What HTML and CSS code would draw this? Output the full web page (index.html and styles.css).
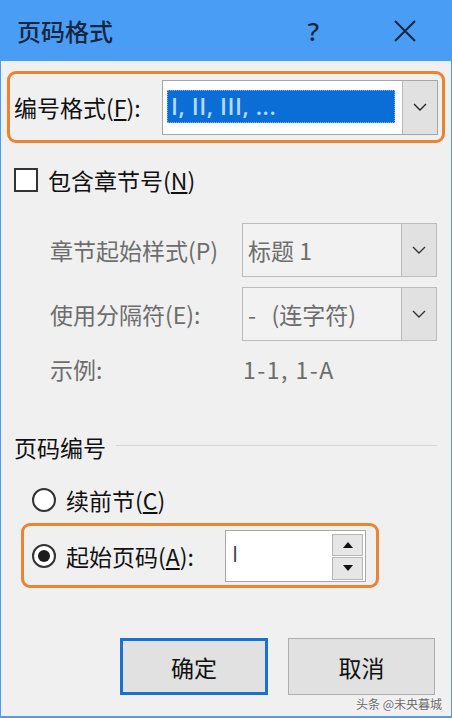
FILE: index.html
```html
<!DOCTYPE html>
<html lang="zh-CN">
<head>
    <meta charset="UTF-8">
    <meta name="viewport" content="width=device-width, initial-scale=1.0">
    <title>页码格式</title>
    <link rel="stylesheet" href="styles.css">
</head>
<body>
    <div class="window">
        <!-- Title bar -->
        <div class="titlebar">
            <span class="title">页码格式</span>
            <span class="help">?</span>
            <span class="close">
                <svg width="22" height="22" viewBox="0 0 22 22">
                    <path d="M1 1 L21 21 M21 1 L1 21" stroke="#16263d" stroke-width="2" fill="none"/>
                </svg>
            </span>
        </div>

        <div class="content">
            <!-- Number format -->
            <div class="mark mark-format">
                <span class="label">编号格式(<u>F</u>):</span>
                <div class="select select-main">
                    <div class="select-value">
                        <span class="selected">I, II, III, ...</span>
                    </div>
                    <div class="select-arrow">
                        <svg width="14" height="8" viewBox="0 0 14 8"><path d="M1 1 L7 7 L13 1" stroke="#222" stroke-width="1.4" fill="none"/></svg>
                    </div>
                </div>
            </div>

            <!-- Chapter number -->
            <div class="check-row">
                <span class="checkbox"></span>
                <span class="label">包含章节号(<u>N</u>)</span>
            </div>

            <div class="sub-row">
                <span class="sub-label">章节起始样式(P)</span>
                <div class="select select-disabled">
                    <div class="select-value">标题 1</div>
                    <div class="select-arrow">
                        <svg width="14" height="8" viewBox="0 0 14 8"><path d="M1 1 L7 7 L13 1" stroke="#333" stroke-width="1.4" fill="none"/></svg>
                    </div>
                </div>
            </div>

            <div class="sub-row sub-row-next">
                <span class="sub-label">使用分隔符(E):</span>
                <div class="select select-disabled">
                    <div class="select-value">-&nbsp;&nbsp;&nbsp;(连字符)</div>
                    <div class="select-arrow">
                        <svg width="14" height="8" viewBox="0 0 14 8"><path d="M1 1 L7 7 L13 1" stroke="#333" stroke-width="1.4" fill="none"/></svg>
                    </div>
                </div>
            </div>

            <div class="example-row">
                <span class="sub-label">示例:</span>
                <span class="example-value">1-1, 1-A</span>
            </div>

            <!-- Page numbering -->
            <div class="group-title">
                <span>页码编号</span>
                <span class="group-line"></span>
            </div>

            <div class="radio-row">
                <span class="radio"></span>
                <span class="label">续前节(<u>C</u>)</span>
            </div>

            <div class="mark mark-start">
                <span class="radio radio-checked"></span>
                <span class="label start-label">起始页码(<u>A</u>):</span>
                <div class="spin">
                    <div class="spin-value">I</div>
                    <div class="spin-buttons">
                        <span class="spin-btn">
                            <svg width="10" height="6" viewBox="0 0 10 6"><path d="M0 6 L5 0 L10 6 Z" fill="#111"/></svg>
                        </span>
                        <span class="spin-btn">
                            <svg width="10" height="6" viewBox="0 0 10 6"><path d="M0 0 L5 6 L10 0 Z" fill="#111"/></svg>
                        </span>
                    </div>
                </div>
            </div>

            <!-- Buttons -->
            <div class="buttons">
                <button class="btn btn-default">确定</button>
                <button class="btn">取消</button>
            </div>
        </div>

        <span class="watermark">头条 @未央暮城</span>
    </div>
</body>
</html>
```

FILE: styles.css
```css
/* Word "page number format" dialog */
body {
    margin: 0;
    padding: 0;
    font-family: "Noto Sans CJK SC", "Noto Sans", sans-serif;
    background-color: #f0f0f0;
}

.window {
    position: relative;
    width: 452px;
    height: 718px;
    box-sizing: border-box;
    border: 1px solid #4a9df5;
    border-top: none;
    border-bottom-width: 2px;
    background-color: #f0f0f0;
    overflow: hidden;
}

.titlebar {
    height: 61px;
    background-color: #4a9df5;
    display: flex;
    align-items: center;
    padding-left: 16px;
    color: #16263d;
}
.title {
    font-size: 24px;
    font-weight: 500;
    flex: 1;
}
.help {
    font-family: "Noto Sans", sans-serif;
    font-size: 26px;
    font-weight: 500;
    margin-right: 75px;
}
.close {
    display: flex;
    margin-right: 35px;
}

.content {
    padding: 0 6px;
    font-size: 23px;
    color: #111;
}

.label {
    line-height: 30px;
}

/* orange highlight frames */
.mark {
    border: 3px solid #ea8430;
    border-radius: 9px;
    display: flex;
    align-items: center;
    box-sizing: border-box;
}
.mark-format {
    margin-top: 10px;
    height: 72px;
    padding: 0 4px;
}
.mark-format .label {
    flex: 1;
}

.select {
    display: flex;
    box-sizing: border-box;
    border: 1px solid #a6a6a6;
}
.select-main {
    width: 276px;
    height: 55px;
    background-color: #fff;
}
.select-value {
    flex: 1;
    display: flex;
    align-items: center;
    padding-left: 4px;
}
.selected {
    display: block;
    width: 228px;
    height: 33px;
    box-sizing: border-box;
    border: 1px dotted #7fb6ef;
    background-color: #0b6ed6;
    color: #b4dbff;
    font-family: "Open Sans", "Noto Sans", sans-serif;
    font-size: 23px;
    font-weight: 600;
    letter-spacing: 0.5px;
    line-height: 30px;
    padding-left: 3px;
    margin-top: -2px;
}
.select-arrow {
    width: 34px;
    border-left: 1px solid #b9b9b9;
    background-color: #e1e1e1;
    display: flex;
    align-items: center;
    justify-content: center;
}

.check-row {
    margin-top: 24px;
    margin-left: 7px;
    display: flex;
    align-items: center;
    gap: 10px;
    height: 25px;
}
.checkbox {
    width: 24px;
    height: 24px;
    box-sizing: border-box;
    border: 2px solid #333;
    background-color: #fff;
}

.sub-row,
.example-row {
    display: flex;
    align-items: center;
    margin-left: 43px;
    margin-right: 8px;
    color: #6d6d6d;
}
.sub-row {
    margin-top: 31px;
}
.sub-row-next {
    margin-top: 10px;
}
.sub-label {
    flex: 0 0 192px;
}
.select-disabled {
    width: 195px;
    height: 54px;
    border-color: #bcbcbc;
    background-color: #f2f2f2;
}
.select-disabled .select-value {
    padding-left: 5px;
}

.example-row {
    margin-top: 13px;
    height: 30px;
}
.example-value {
    padding-left: 1px;
    letter-spacing: 1.5px;
}

.group-title {
    margin-top: 48px;
    margin-left: 7px;
    margin-right: 8px;
    display: flex;
    align-items: center;
    height: 30px;
    color: #111;
}
.group-line {
    flex: 1;
    height: 1px;
    background-color: #d6d6d6;
    margin-left: 10px;
    margin-top: -4px;
}

.radio-row {
    margin-top: 23px;
    margin-left: 25px;
    display: flex;
    align-items: center;
    gap: 10px;
    height: 30px;
}
.radio {
    width: 24px;
    height: 24px;
    box-sizing: border-box;
    border: 2px solid #333;
    border-radius: 50%;
    background-color: #fff;
    display: flex;
    align-items: center;
    justify-content: center;
}
.radio-checked::after {
    content: "";
    width: 12px;
    height: 12px;
    border-radius: 50%;
    background-color: #1c1c1c;
}

.mark-start {
    margin-top: 8px;
    margin-left: 14px;
    width: 358px;
    height: 65px;
    padding: 0 10px 0 8px;
}
.start-label {
    flex: 1;
    margin-left: 10px;
}

.spin {
    width: 141px;
    height: 52px;
    box-sizing: border-box;
    border: 1px solid #a8a8a8;
    background-color: #fff;
    display: flex;
}
.spin-value {
    flex: 1;
    padding-left: 6px;
    padding-top: 7px;
    color: #444;
    font-family: "Open Sans", sans-serif;
    font-size: 22px;
}
.spin-buttons {
    width: 31px;
    margin: 3px 2px 1px 0;
    display: flex;
    flex-direction: column;
    gap: 1px;
}
.spin-btn {
    flex: 1;
    background-color: #e6e6e6;
    border: 1px solid #b5b5b5;
    display: flex;
    align-items: center;
    justify-content: center;
}

.buttons {
    margin-top: 50px;
    padding-right: 10px;
    display: flex;
    justify-content: flex-end;
    gap: 20px;
}
.btn {
    width: 147px;
    height: 57px;
    box-sizing: border-box;
    background-color: #e1e1e1;
    border: 1px solid #adadad;
    font-family: "Noto Sans CJK SC", sans-serif;
    font-size: 23px;
    color: #111;
    padding: 0;
}
.btn-default {
    width: 148px;
    border: 3px solid #1a72d0;
}

.watermark {
    position: absolute;
    right: 9px;
    bottom: 4px;
    font-size: 12px;
    color: #6a6a6a;
    text-shadow: 0 0 2px #fff;
}
```
